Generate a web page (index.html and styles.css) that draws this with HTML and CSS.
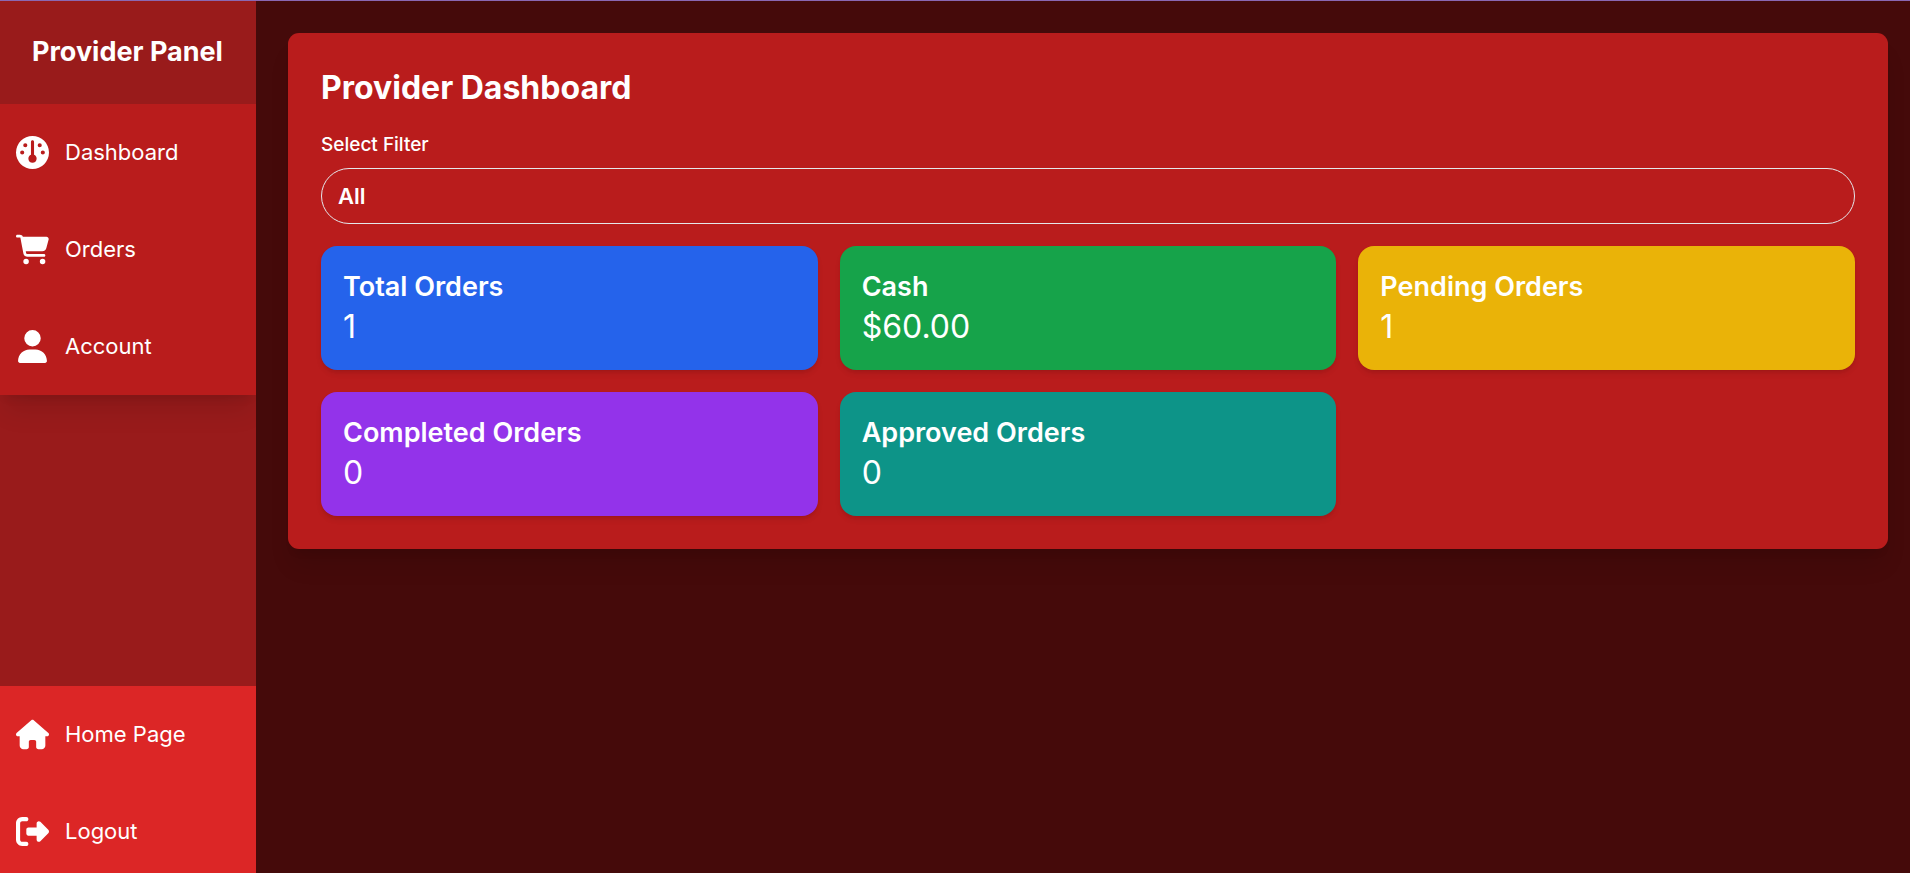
FILE: index.html
```html
<!DOCTYPE html>
<html lang="en">
<head>
<meta charset="utf-8">
<meta name="viewport" content="width=device-width, initial-scale=1">
<title>Provider Dashboard</title>
<link rel="stylesheet" href="styles.css">
</head>
<body>
<div class="layout">
  <aside class="sidebar">
    <div class="brand">Provider Panel</div>
    <nav class="menu menu-main" aria-label="Provider">
      <a class="menu-item" href="#dashboard">
        <svg class="icon" viewBox="0 0 512 512" aria-hidden="true"><path d="M0 256a256 256 0 1 1 512 0A256 256 0 1 1 0 256zM256 416c35.300 0 64-28.700 64-64c0-26.900-16.500-49.900-40-59.300V88c0-13.300-10.700-24-24-24s-24 10.700-24 24V292.700c-23.500 9.500-40 32.500-40 59.300c0 35.300 28.700 64 64 64zM176 144a32 32 0 1 0-64 0 32 32 0 1 0 64 0zM96 288a32 32 0 1 0 0-64 32 32 0 1 0 0 64zm352-32a32 32 0 1 0-64 0 32 32 0 1 0 64 0zM368 176a32 32 0 1 0 0-64 32 32 0 1 0 0 64z" fill-rule="evenodd"/></svg>
        <span>Dashboard</span>
      </a>
      <a class="menu-item" href="#orders">
        <svg class="icon" viewBox="0 0 576 512" aria-hidden="true"><path d="M0 24C0 10.700 10.700 0 24 0H69.500c22 0 41.500 12.800 50.600 32h411c26.300 0 45.500 25 38.600 50.400l-41 152.300c-8.500 31.400-37 53.300-69.500 53.300H170.700l5.400 28.500c2.200 11.300 12.100 19.500 23.600 19.500H488c13.300 0 24 10.700 24 24s-10.700 24-24 24H199.700c-34.600 0-64.300-24.600-70.700-58.500L77.400 54.500c-.7-3.800-4-6.500-7.900-6.500H24C10.700 48 0 37.300 0 24zM128 464a48 48 0 1 1 96 0 48 48 0 1 1-96 0zm336-48a48 48 0 1 1 0 96 48 48 0 1 1 0-96z"/></svg>
        <span>Orders</span>
      </a>
      <a class="menu-item" href="#account">
        <svg class="icon" viewBox="0 0 448 512" aria-hidden="true"><path d="M224 256A128 128 0 1 0 224 0a128 128 0 1 0 0 256zm-45.700 48C79.800 304 0 383.800 0 482.300C0 498.700 13.300 512 29.700 512H418.300c16.400 0 29.700-13.300 29.700-29.700C448 383.800 368.200 304 269.700 304H178.300z"/></svg>
        <span>Account</span>
      </a>
    </nav>
    <nav class="menu menu-bottom" aria-label="Site">
      <a class="menu-item" href="#home">
        <svg class="icon" viewBox="0 0 576 512" aria-hidden="true"><path d="M575.800 255.500c0 18-15 32.100-32 32.100h-32l.7 160.200c0 35.300-28 64.200-64 64.200H392c-22.100 0-40-17.900-40-40V384c0-17.700-14.300-32-32-32H256c-17.700 0-32 14.300-32 32v88c0 22.100-17.900 40-40 40H128.100c-35.300 0-64-28.700-64-64V287.600H32c-18 0-32-14-32-32.100c0-9 3-17 10-24L266.400 8c7-7 15-8 22-8s15 2 21 7L564.800 231.500c8 7 12 15 11 24z"/></svg>
        <span>Home Page</span>
      </a>
      <a class="menu-item" href="#logout">
        <svg class="icon" viewBox="0 0 512 512" aria-hidden="true"><path d="M377.900 105.900L500.700 228.700c7.200 7.200 11.300 17.100 11.300 27.300s-4.100 20.100-11.300 27.300L377.900 406.100c-6.400 6.400-15 9.900-24 9.900c-18.700 0-33.900-15.200-33.900-33.900V320H192c-17.700 0-32-14.300-32-32V224c0-17.700 14.300-32 32-32H320V129.900c0-18.700 15.200-33.900 33.900-33.900c9 0 17.600 3.600 24 9.900zM160 96H96c-17.700 0-32 14.300-32 32V384c0 17.700 14.300 32 32 32h64c17.700 0 32 14.300 32 32s-14.300 32-32 32H96c-53 0-96-43-96-96V128C0 75 43 32 96 32h64c17.700 0 32 14.300 32 32s-14.300 32-32 32z"/></svg>
        <span>Logout</span>
      </a>
    </nav>
  </aside>
  <main class="content">
    <section class="panel">
      <h1 class="title">Provider Dashboard</h1>
      <label class="filter-label" for="filter">Select Filter</label>
      <select class="filter" id="filter">
        <option>All</option>
      </select>
      <div class="cards">
        <article class="card card-blue"><h2 class="card-title">Total Orders</h2><p class="card-value">1</p></article>
        <article class="card card-green"><h2 class="card-title">Cash</h2><p class="card-value">$60.00</p></article>
        <article class="card card-yellow"><h2 class="card-title">Pending Orders</h2><p class="card-value">1</p></article>
        <article class="card card-purple"><h2 class="card-title">Completed Orders</h2><p class="card-value">0</p></article>
        <article class="card card-teal"><h2 class="card-title">Approved Orders</h2><p class="card-value">0</p></article>
      </div>
    </section>
  </main>
</div>
</body>
</html>
```
FILE: styles.css
```css
* {
  box-sizing: border-box;
  margin: 0;
}

body {
  border-top: 1px solid #8b68b3;
  background: #450a0a;
  color: #fff;
  font-family: Inter, "Liberation Sans", sans-serif;
  font-size: 22px;
  line-height: 33px;
}

.layout {
  display: flex;
  min-height: calc(100vh - 1px);
}

.sidebar {
  display: flex;
  flex-direction: column;
  flex: none;
  width: 256px;
  background: #991b1b;
  overflow: hidden;
}

.brand {
  padding: 32px 32px 33px;
  font-size: 27px;
  font-weight: 700;
  line-height: 38px;
  white-space: nowrap;
}

.menu-main,
.panel {
  background: #b91c1c;
  box-shadow: 0 20px 25px -5px rgba(0, 0, 0, 0.1), 0 8px 10px -6px rgba(0, 0, 0, 0.1);
}

.menu-bottom {
  margin-top: auto;
  background: #dc2626;
}

.menu-item {
  display: flex;
  align-items: center;
  gap: 16px;
  padding: 32px 16px;
  color: inherit;
  text-decoration: none;
}

.menu-bottom .menu-item:last-child {
  padding-bottom: 25px;
}

.icon {
  flex: none;
  width: 33px;
  height: 33px;
  fill: currentColor;
}

.content {
  flex: 1;
  min-width: 0;
  padding: 32px 22px 32px 32px;
}

.panel {
  padding: 33px;
  border-radius: 11px;
}

.title {
  margin-bottom: 21px;
  font-size: 32px;
  font-weight: 700;
  line-height: 44px;
}

.filter-label {
  display: block;
  margin-bottom: 10px;
  font-size: 19px;
  font-weight: 500;
  line-height: 27px;
}

.filter {
  display: block;
  width: 100%;
  height: 56px;
  margin-bottom: 22px;
  padding: 0 16px;
  border: 1px solid #e5e7eb;
  border-radius: 28px;
  appearance: none;
  background: transparent;
  color: inherit;
  font: inherit;
  font-weight: 600;
}

.cards {
  display: grid;
  grid-template-columns: repeat(3, 1fr);
  gap: 22px;
}

.card {
  padding: 22px;
  border-radius: 16px;
  box-shadow: 0 4px 6px -1px rgba(0, 0, 0, 0.1), 0 2px 4px -2px rgba(0, 0, 0, 0.1);
}

.card-title {
  font-size: 27px;
  font-weight: 600;
  line-height: 38px;
}

.card-value {
  font-size: 32px;
  line-height: 42px;
}

.card-blue { background: #2563eb; }
.card-green { background: #16a34a; }
.card-yellow { background: #eab308; }
.card-purple { background: #9333ea; }
.card-teal { background: #0d9488; }
```
